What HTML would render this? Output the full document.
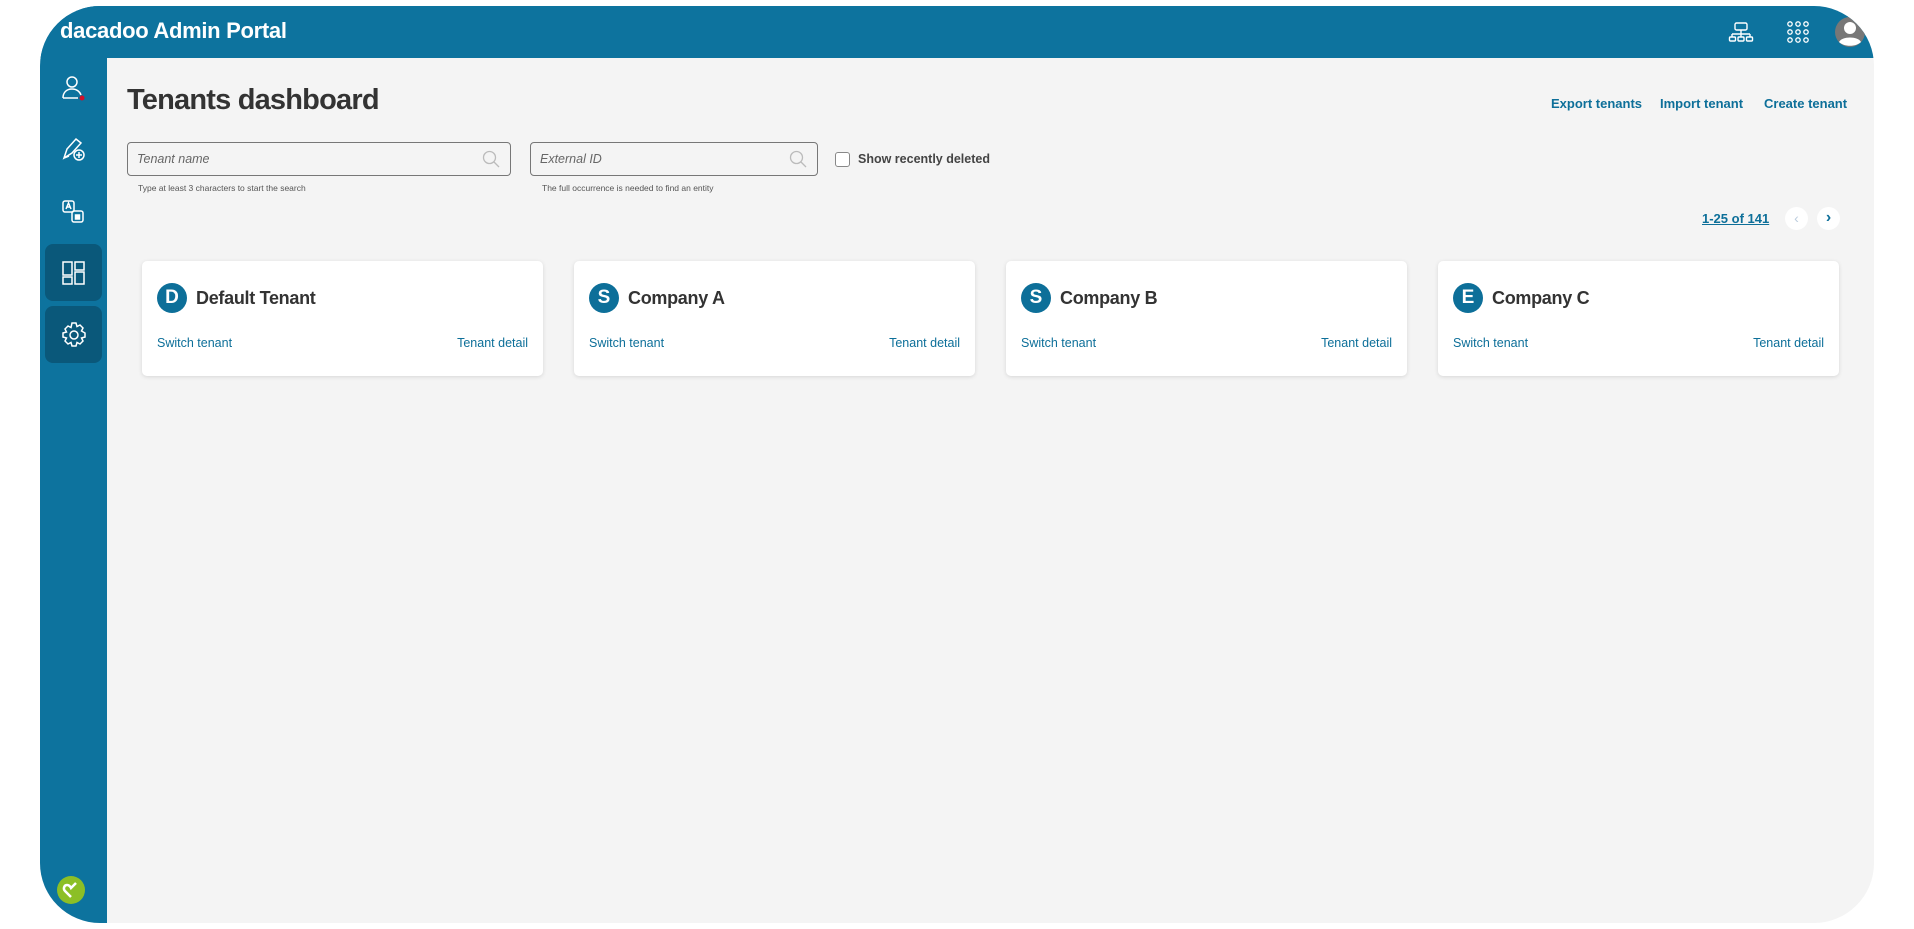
<!DOCTYPE html>
<html><head><meta charset="utf-8"><style>
*{box-sizing:border-box;margin:0;padding:0}
body{width:1914px;height:929px;background:#fff;font-family:"Liberation Sans",sans-serif;position:relative;overflow:hidden}
.frame{position:absolute;left:40px;top:6px;width:1834px;height:917px;border-radius:60px;overflow:hidden;background:#f4f4f4}
.hdr{position:absolute;left:0;top:0;right:0;height:52px;background:#0d739e}
.side{position:absolute;left:0;top:0;width:67px;bottom:0;background:#0d739e}
.ht{position:absolute;left:20px;top:12px;color:#fff;font-size:22px;font-weight:bold;letter-spacing:-0.3px}
.a{position:absolute;color:#0d6f99}
.card{position:absolute;top:255px;width:401px;height:115px;background:#fff;border-radius:5px;box-shadow:0 1px 4px rgba(0,0,0,.12)}
.circ{position:absolute;left:15px;top:22px;width:30px;height:30px;border-radius:50%;background:#0d6f99;color:#fff;font-weight:bold;font-size:19px;text-align:center;line-height:30px}
.cn{position:absolute;left:54px;top:27px;font-size:18px;font-weight:bold;color:#333;letter-spacing:-0.3px}
.sw,.td{position:absolute;top:75px;font-size:12.5px;color:#0d6f99}
.sw{left:15px}.td{right:15px}
.inp{position:absolute;top:136px;height:34px;border:1px solid #777;border-radius:4px;background:#f4f4f4}
.inp span{position:absolute;left:9px;top:9px;font-style:italic;font-size:12.5px;color:#666}
.help{position:absolute;top:177px;font-size:8.5px;color:#555}
.sb{position:absolute;left:5px;width:57px;height:57px;border-radius:8px;background:#0a587a}
</style></head><body>
<div class="frame">
<div class="hdr"></div>
<div class="side"></div>
<div class="ht">dacadoo Admin Portal</div>
<svg style="position:absolute;left:1688px;top:14px" width="26" height="26" viewBox="0 0 26 26" fill="none" stroke="#fff" stroke-width="1.4"><rect x="7" y="3" width="12" height="7" rx="1.5"/><path d="M13 10v4M4 14h18M4 14v3M13 14v3M22 14v3"/><rect x="1.5" y="17" width="6" height="4" rx="1"/><rect x="10" y="17" width="6" height="4" rx="1"/><rect x="18.5" y="17" width="6" height="4" rx="1"/></svg>
<svg style="position:absolute;left:1745px;top:13px" width="26" height="26" viewBox="0 0 26 26" fill="none" stroke="#fff" stroke-width="1.3"><circle cx="5" cy="5" r="2.2"/><circle cx="13" cy="5" r="2.2"/><circle cx="21" cy="5" r="2.2"/><circle cx="5" cy="13" r="2.2"/><circle cx="13" cy="13" r="2.2"/><circle cx="21" cy="13" r="2.2"/><circle cx="5" cy="21" r="2.2"/><circle cx="21" cy="21" r="2.2"/><circle cx="13" cy="21" r="2.2"/></svg>
<svg style="position:absolute;left:1794px;top:10px" width="32" height="32" viewBox="0 0 32 32"><circle cx="16" cy="16" r="15" fill="#777"/><circle cx="16" cy="12" r="6" fill="#fff"/><path d="M5 26c3-6 19-6 22 0c-5 5-17 5-22 0z" fill="#fff"/></svg>
<svg style="position:absolute;left:20px;top:68px" width="28" height="28" viewBox="0 0 28 28" fill="none" stroke="#fff" stroke-width="1.5"><circle cx="12" cy="8" r="5"/><path d="M3 24c0-6 4-9 9-9s8 3 9 6M3 24h15"/><circle cx="22" cy="24" r="2.5" fill="#d0102a" stroke="none"/></svg>
<svg style="position:absolute;left:20px;top:130px" width="28" height="28" viewBox="0 0 28 28" fill="none" stroke="#fff" stroke-width="1.5"><path d="M4 22l3-9 9-10 5 4-9 10z M4 22l5-2"/><circle cx="19" cy="19" r="5"/><path d="M19 16v6M16 19h6"/></svg>
<svg style="position:absolute;left:20px;top:192px" width="28" height="28" viewBox="0 0 28 28" fill="none" stroke="#fff" stroke-width="1.5"><rect x="3" y="3" width="11" height="11" rx="2"/><path d="M6 11l2.5-6 2.5 6M7 9h3"/><rect x="12" y="13" width="11" height="11" rx="2"/><rect x="15.5" y="17" width="4" height="4" fill="#fff"/></svg>
<div class="sb" style="top:238px"></div>
<svg style="position:absolute;left:21px;top:254px" width="26" height="26" viewBox="0 0 26 26" fill="none" stroke="#fff" stroke-width="1.5"><rect x="2" y="2" width="9" height="13"/><rect x="14" y="2" width="9" height="8"/><rect x="2" y="17" width="9" height="7"/><rect x="14" y="12" width="9" height="12"/></svg>
<div class="sb" style="top:300px"></div>
<svg style="position:absolute;left:20px;top:315px" width="28" height="28" viewBox="0 0 28 28" fill="none" stroke="#fff" stroke-width="1.5"><path d="M12 2h4l1 3.5 3-1.5 3 3-1.5 3L25 12v4l-3.5 1 1.5 3-3 3-3-1.5L16 25h-4l-1-3.5-3 1.5-3-3 1.5-3L3 16v-4l3.5-1L5 8l3-3 3 1.5z"/><circle cx="14" cy="14" r="4"/></svg>
<svg style="position:absolute;left:16px;top:869px" width="30" height="30" viewBox="0 0 30 30"><circle cx="15" cy="15" r="14" fill="#8cbf26"/><path d="M15 22l-6-6c-2-2-1-6 2-6 2 0 3 1 4 3l5-5" fill="none" stroke="#fff" stroke-width="2.5"/></svg>
<div style="position:absolute;left:87px;top:78px;font-size:29px;font-weight:bold;color:#333;letter-spacing:-0.8px">Tenants dashboard</div>
<div class="a" style="left:1511px;top:90px;font-size:13px;font-weight:bold">Export tenants</div>
<div class="a" style="left:1620px;top:90px;font-size:13px;font-weight:bold">Import tenant</div>
<div class="a" style="left:1724px;top:90px;font-size:13px;font-weight:bold">Create tenant</div>
<div class="inp" style="left:87px;width:384px"><span>Tenant name</span><svg style="position:absolute;right:10px;top:7px" width="18" height="18" viewBox="0 0 18 18" fill="none" stroke="#bbb" stroke-width="1.3"><circle cx="7.5" cy="7.5" r="6"/><path d="M12 12l5 5"/></svg></div>
<div class="help" style="left:98px">Type at least 3 characters to start the search</div>
<div class="inp" style="left:490px;width:288px"><span>External ID</span><svg style="position:absolute;right:10px;top:7px" width="18" height="18" viewBox="0 0 18 18" fill="none" stroke="#bbb" stroke-width="1.3"><circle cx="7.5" cy="7.5" r="6"/><path d="M12 12l5 5"/></svg></div>
<div class="help" style="left:502px">The full occurrence is needed to find an entity</div>
<div style="position:absolute;left:795px;top:146px;width:15px;height:15px;border:1px solid #888;border-radius:3px;background:#fff"></div>
<div style="position:absolute;left:818px;top:146px;font-size:12.5px;font-weight:bold;color:#444">Show recently deleted</div>
<div class="a" style="left:1662px;top:205px;font-size:13px;font-weight:bold;text-decoration:underline">1-25 of 141</div>
<div style="position:absolute;left:1745px;top:201px;width:23px;height:23px;border-radius:50%;background:#fff;color:#bcd;text-align:center;line-height:22px;font-size:14px">&#8249;</div>
<div style="position:absolute;left:1777px;top:201px;width:23px;height:23px;border-radius:50%;background:#fff;color:#0d6f99;text-align:center;line-height:22px;font-size:16px;font-weight:bold">&#8250;</div>
<div class="card" style="left:102px"><div class="circ">D</div><div class="cn">Default Tenant</div><div class="sw">Switch tenant</div><div class="td">Tenant detail</div></div>
<div class="card" style="left:534px"><div class="circ">S</div><div class="cn">Company A</div><div class="sw">Switch tenant</div><div class="td">Tenant detail</div></div>
<div class="card" style="left:966px"><div class="circ">S</div><div class="cn">Company B</div><div class="sw">Switch tenant</div><div class="td">Tenant detail</div></div>
<div class="card" style="left:1398px"><div class="circ">E</div><div class="cn">Company C</div><div class="sw">Switch tenant</div><div class="td">Tenant detail</div></div>
</div>
</body></html>
